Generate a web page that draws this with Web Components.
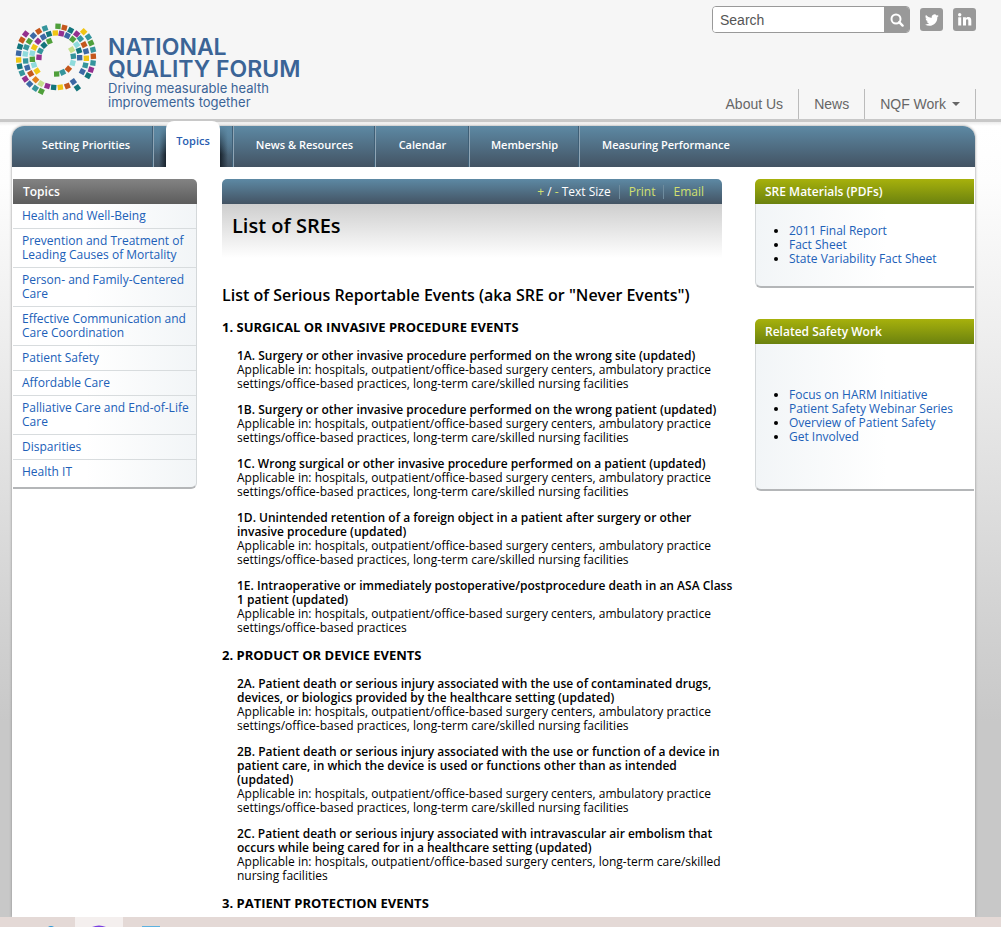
<!DOCTYPE html>
<html lang="en">
<head>
<meta charset="utf-8">
<meta name="viewport" content="width=device-width, initial-scale=1">
<title>NQF: List of SREs</title>
<style>
    * { box-sizing: border-box; }

    body {
        margin: 0;
        min-height: 100vh;
        display: flex;
        flex-direction: column;
        font-family: "Open Sans", "Noto Sans", sans-serif;
        font-size: 12px;
        line-height: 14px;
        color: #000;
        background: #fff;
    }

    nqf-page { flex: 1; }
    nqf-card a { color: #2060b8; text-decoration: none; }
</style>
</head>
<body>

<nqf-header></nqf-header>

<nqf-page>
    <nqf-nav slot="nav"></nqf-nav>
    <nqf-topics slot="left"></nqf-topics>
    <nqf-article slot="main"></nqf-article>
    <nqf-card slot="right" heading="SRE Materials (PDFs)">
        <li><a href="#">2011 Final Report</a></li>
        <li><a href="#">Fact Sheet</a></li>
        <li><a href="#">State Variability Fact Sheet</a></li>
    </nqf-card>
    <nqf-card slot="right" heading="Related Safety Work" roomy>
        <li><a href="#">Focus on HARM Initiative</a></li>
        <li><a href="#">Patient Safety Webinar Series</a></li>
        <li><a href="#">Overview of Patient Safety</a></li>
        <li><a href="#">Get Involved</a></li>
    </nqf-card>
</nqf-page>

<nqf-taskbar></nqf-taskbar>

<script>
const COLORS = {
    p: "#93308f", o: "#c4571c", d: "#13757c", b: "#3c68a4", y: "#f0c514",
    t: "#35959c", g: "#4f9f3b", c: "#8fdbdc", l: "#c3df8b", a: "#e0801c"
};

// tiles of the ring: x, y, colour
const TILES = [
    [47,48,"p"],[36,66,"o"],[30,86,"d"],[26,106,"b"],[26,126,"y"],[29,145,"d"],[36,165,"t"],[46,183,"p"],[59,198,"b"],[76,211,"t"],[94,220,"g"],
    [105,31,"t"],[86,40,"o"],[70,53,"b"],[58,70,"g"],[49,88,"t"],[46,108,"c"],[47,129,"t"],[52,149,"b"],[62,167,"o"],[77,185,"a"],[93,197,"l"],
    [112,204,"p"],[131,208,"d"],[151,208,"y"],[172,204,"o"],[190,191,"b"],[202,209,"d"],
    [117,48,"d"],[100,57,"b"],[84,70,"p"],[73,88,"y"],[67,106,"c"],[67,124,"g"],[72,141,"c"],[81,159,"y"],
    [118,70,"g"],[102,82,"d"],[91,99,"t"],[87,118,"p"],
    [144,25,"g"],[163,29,"o"],[182,37,"d"],[200,48,"p"],[211,62,"t"],[221,41,"y"],[235,57,"t"],[243,75,"g"],[249,95,"t"],[250,115,"o"],[249,135,"t"],[243,155,"p"],[234,173,"d"],
    [222,80,"o"],[228,100,"b"],[229,121,"y"],[226,142,"t"],[217,161,"b"],
    [136,45,"y"],[154,47,"p"],[172,53,"b"],[188,64,"g"],[200,80,"c"],[207,98,"d"],[209,119,"b"],
    [185,95,"l"],[190,115,"t"],[188,135,"c"],[175,153,"o"],[158,163,"t"],[140,168,"g"]
];

class NqfHeader extends HTMLElement {
    constructor() {
        super();
        this.attachShadow({ mode: "open" });

        const tiles = TILES.map(([x, y, c]) => {
            const angle = Math.round(Math.atan2(y - 122, x - 139) * 180 / Math.PI);
            return `<rect x="-8" y="-8" width="16" height="16" fill="${COLORS[c]}" transform="translate(${x} ${y}) rotate(${angle})"/>`;
        }).join("");

        this.shadowRoot.innerHTML = `
            <style>
                * { box-sizing: border-box; }

                :host {
                    display: block;
                    background: #f6f6f6;
                    border-bottom: 3px solid #c8c8c8;
                }

                .inner {
                    display: flex;
                    justify-content: space-between;
                    min-height: 119px;
                    padding: 0 25px 0 10px;
                }

                .logo {
                    display: flex;
                    gap: 6px;
                    padding-top: 18px;
                    color: #3b6496;
                    text-decoration: none;
                    font-family: Inter, sans-serif;
                }

                .name {
                    padding-top: 18px;
                    font-size: 23px;
                    line-height: 22px;
                    font-weight: 600;
                }

                .name span { display: block; }

                .name .motto {
                    padding-top: 1px;
                    font-size: 13px;
                    line-height: 14px;
                    font-weight: 400;
                }

                .side {
                    display: flex;
                    flex-direction: column;
                    justify-content: space-between;
                    align-items: flex-end;
                    padding-top: 6px;
                    font-family: "Liberation Sans", Arial, sans-serif;
                }

                .tools { display: flex; gap: 10px; align-items: center; }

                form {
                    display: flex;
                    height: 27px;
                    border: 1px solid #999;
                    border-radius: 4px;
                    overflow: hidden;
                    background: #fff;
                }

                input {
                    width: 171px;
                    border: 0;
                    padding: 0 7px;
                    font: 14px "Liberation Sans", Arial, sans-serif;
                    outline: 0;
                }

                input::placeholder { color: #555; opacity: 1; }

                button {
                    width: 25px;
                    border: 0;
                    padding: 0;
                    background: #999;
                    display: grid;
                    place-items: center;
                }

                .social {
                    width: 23px;
                    height: 23px;
                    border-radius: 3px;
                    background: #999;
                    display: grid;
                    place-items: center;
                }

                nav { display: flex; border-right: 1px solid #bbb; }

                nav a {
                    display: flex;
                    align-items: center;
                    gap: 6px;
                    height: 30px;
                    padding: 0 15px;
                    font-size: 14px;
                    color: #666;
                    text-decoration: none;
                }

                nav a + a { border-left: 1px solid #bbb; }

                .caret {
                    border: 4px solid transparent;
                    border-top-color: #666;
                    border-bottom: 0;
                }
            </style>

            <header class="inner">
                <a class="logo" href="#">
                    <svg width="92" height="82" viewBox="0 0 276 246" aria-hidden="true">${tiles}</svg>
                    <span class="name">
                        <span>NATIONAL</span>
                        <span>QUALITY FORUM</span>
                        <span class="motto">Driving measurable health<br>improvements together</span>
                    </span>
                </a>
                <div class="side">
                    <div class="tools">
                        <form role="search">
                            <input type="text" placeholder="Search" aria-label="Search">
                            <button type="button" aria-label="Go">
                                <svg width="14" height="14" viewBox="0 0 14 14" fill="none" stroke="#fff">
                                    <circle cx="6" cy="6" r="4.5" stroke-width="2"/>
                                    <path d="M9.2 9.2 12.6 12.6" stroke-width="2.4" stroke-linecap="round"/>
                                </svg>
                            </button>
                        </form>
                        <a class="social" href="#" aria-label="Twitter">
                            <svg width="14" height="14" viewBox="0 0 24 24" fill="#fff"><path d="M23.6 4.9a9.6 9.6 0 0 1-2.8.8 4.8 4.8 0 0 0 2.1-2.7 9.6 9.6 0 0 1-3 1.2 4.8 4.8 0 0 0-8.3 4.4A13.7 13.7 0 0 1 1.7 3.5a4.8 4.8 0 0 0 1.5 6.5 4.8 4.8 0 0 1-2.2-.6v.1a4.8 4.8 0 0 0 3.9 4.7 4.8 4.8 0 0 1-2.2.1 4.8 4.8 0 0 0 4.5 3.4A9.7 9.7 0 0 1 0 19.6a13.7 13.7 0 0 0 7.4 2.2c8.9 0 14-7.5 13.7-14.4a9.8 9.8 0 0 0 2.5-2.5z"/></svg>
                        </a>
                        <a class="social" href="#" aria-label="LinkedIn">
                            <svg width="15" height="15" viewBox="0 0 15 15" fill="#fff"><circle cx="2.7" cy="2.7" r="1.7"/><path d="M1.2 5.2h3v8.3h-3zM6 5.2h2.9v1.2c.5-.9 1.4-1.4 2.5-1.4 2.3 0 2.9 1.5 2.9 3.7v4.8h-3V9.2c0-1-.1-1.9-1.2-1.9S9 8.2 9 9.2v4.3H6z"/></svg>
                        </a>
                    </div>
                    <nav>
                        <a href="#">About Us</a>
                        <a href="#">News</a>
                        <a href="#">NQF Work <span class="caret"></span></a>
                    </nav>
                </div>
            </header>
        `;
    }
}

class NqfPage extends HTMLElement {
    constructor() {
        super();
        this.attachShadow({ mode: "open" });

        this.shadowRoot.innerHTML = `
            <style>
                :host {
                    display: flex;
                    padding: 4px 26px 0 12px;
                    background: linear-gradient(#ececec, #fff 4px, #fdfdfd 60px, #c8c8c8 600px);
                }

                .sheet {
                    flex: 1;
                    background: #fff;
                    border-radius: 12px 12px 0 0;
                    box-shadow: 0 0 3px #888;
                    clip-path: inset(-5px -5px 0 -5px);
                }

                .columns {
                    display: grid;
                    grid-template-columns: 184px minmax(0, 1fr) 219px;
                    align-items: start;
                    padding: 12px 1px 0;
                }

                .main { padding: 0 33px 0 25px; }
                .right { display: grid; gap: 31px; }
            </style>

            <div class="sheet">
                <slot name="nav"></slot>
                <div class="columns">
                    <slot name="left"></slot>
                    <div class="main"><slot name="main"></slot></div>
                    <div class="right"><slot name="right"></slot></div>
                </div>
            </div>
        `;
    }
}

class NqfNav extends HTMLElement {
    constructor() {
        super();
        this.attachShadow({ mode: "open" });

        this.shadowRoot.innerHTML = `
            <style>
                :host { display: block; }

                nav {
                    display: flex;
                    height: 41px;
                    border-radius: 12px 12px 0 0;
                    background: linear-gradient(#5d89a4, #435363);
                }

                a {
                    display: flex;
                    align-items: center;
                    justify-content: center;
                    padding-bottom: 3px;
                    box-sizing: border-box;
                    color: #fff;
                    font-size: 11px;
                    font-weight: 600;
                    text-decoration: none;
                    border-right: 1px solid #8fa5b5;
                    box-shadow: inset -1px 0 #3f5f76;
                }

                .w80 { width: 80px; }
                .w94 { width: 94px; }
                .w110 { width: 110px; }
                .w142 { width: 142px; }
                .first { padding-left: 7px; }

                .last {
                    padding-left: 22px;
                    border: 0;
                    box-shadow: none;
                }

                .current {
                    padding: 0 13px 0 12px;
                    background:
                        linear-gradient(#5d89a4, transparent 70%),
                        linear-gradient(90deg, transparent 5px, #18222c 12px, #18222c 66px, transparent 74px);
                }

                .tab {
                    flex: 1;
                    align-self: flex-end;
                    height: 46px;
                    margin-top: -5px;
                    padding-top: 13px;
                    box-sizing: border-box;
                    border-radius: 8px 8px 0 0;
                    background: #fff;
                    color: #2a5db0;
                    text-align: center;
                }
            </style>

            <nav>
                <a class="w142 first" href="#">Setting Priorities</a>
                <a class="w80 current" href="#" aria-current="page"><span class="tab">Topics</span></a>
                <a class="w142" href="#">News &amp; Resources</a>
                <a class="w94" href="#">Calendar</a>
                <a class="w110" href="#">Membership</a>
                <a class="last" href="#">Measuring Performance</a>
            </nav>
        `;
    }
}

class NqfTopics extends HTMLElement {
    constructor() {
        super();
        this.attachShadow({ mode: "open" });

        const topics = [
            "Health and Well-Being",
            "Prevention and Treatment of Leading Causes of Mortality",
            "Person- and Family-Centered Care",
            "Effective Communication and Care Coordination",
            "Patient Safety",
            "Affordable Care",
            "Palliative Care and End-of-Life Care",
            "Disparities",
            "Health IT"
        ];

        this.shadowRoot.innerHTML = `
            <style>
                :host { display: block; }

                h2 {
                    margin: 0;
                    padding: 0 10px;
                    font-size: 12px;
                    line-height: 25px;
                    font-weight: 600;
                    color: #fff;
                    background: linear-gradient(#838383, #5c5c5c);
                    border-radius: 0 5px 0 0;
                }

                ul {
                    margin: 0;
                    padding: 0 0 2px;
                    list-style: none;
                    border: 1px solid #d4d8da;
                    border-width: 0 1px 2px 0;
                    border-bottom-color: #b4b6b8;
                    border-radius: 0 0 6px 0;
                    background: linear-gradient(90deg, #fff 40%, #f2f5f7);
                }

                li { padding: 5px 2px 5px 9px; border-bottom: 1px solid #d8dcde; }
                li:last-child { padding-bottom: 6px; border: 0; }
                a { color: #2060b8; text-decoration: none; }
            </style>

            <h2>Topics</h2>
            <ul>${topics.map(t => `<li><a href="#">${t}</a></li>`).join("")}</ul>
        `;
    }
}

class NqfArticle extends HTMLElement {
    constructor() {
        super();
        this.attachShadow({ mode: "open" });

        const offices = "Applicable in: hospitals, outpatient/office-based surgery centers, ambulatory practice settings/office-based practices";
        const all = offices + ", long-term care/skilled nursing facilities";
        const noAmbulatory = "Applicable in: hospitals, outpatient/office-based surgery centers, long-term care/skilled nursing facilities";

        const sections = [
            ["1. SURGICAL OR INVASIVE PROCEDURE EVENTS", [
                ["1A. Surgery or other invasive procedure performed on the wrong site (updated)", all],
                ["1B. Surgery or other invasive procedure performed on the wrong patient (updated)", all],
                ["1C. Wrong surgical or other invasive procedure performed on a patient (updated)", all],
                ["1D. Unintended retention of a foreign object in a patient after surgery or other invasive procedure (updated)", all],
                ["1E. Intraoperative or immediately postoperative/postprocedure death in an ASA Class 1 patient (updated)", offices]
            ]],
            ["2. PRODUCT OR DEVICE EVENTS", [
                ["2A. Patient death or serious injury associated with the use of contaminated drugs, devices, or biologics provided by the healthcare setting (updated)", all],
                ["2B. Patient death or serious injury associated with the use or function of a device in patient care, in which the device is used or functions other than as intended (updated)", all],
                ["2C. Patient death or serious injury associated with intravascular air embolism that occurs while being cared for in a healthcare setting (updated)", noAmbulatory]
            ]],
            ["3. PATIENT PROTECTION EVENTS", []]
        ];

        this.shadowRoot.innerHTML = `
            <style>
                :host { display: block; padding-bottom: 6px; }

                .bar {
                    display: flex;
                    justify-content: flex-end;
                    align-items: center;
                    height: 25px;
                    padding-right: 18px;
                    border-radius: 5px 5px 0 0;
                    background: linear-gradient(#5d89a4, #435363);
                    color: #fff;
                }

                .bar a { color: #d3e06f; text-decoration: none; }

                .bar > a {
                    margin-left: 8px;
                    padding-left: 9px;
                    border-left: 1px solid #6f8c9e;
                }

                h1 {
                    margin: 0;
                    height: 54px;
                    padding: 10px 10px 0;
                    box-sizing: border-box;
                    font-size: 20px;
                    line-height: 24px;
                    font-weight: 600;
                    background: linear-gradient(#cecece, #fff);
                }

                h2 {
                    margin: 27px 0 14px;
                    font-size: 16px;
                    line-height: 20px;
                    font-weight: 600;
                }

                h3 {
                    margin: 12px 0 14px;
                    font-size: 13px;
                    line-height: 16px;
                    font-weight: 700;
                }

                h3:last-child { margin-bottom: 0; }

                h4, p {
                    margin: 0 0 0 15px;
                    font-size: 12px;
                    line-height: 14px;
                }

                /* event names run a little into the gutter */
                h4 { margin-right: -12px; font-weight: 600; }
                p + h4 { margin-top: 12px; }
            </style>

            <div class="bar">
                <span><a href="#">+</a> / <a href="#">-</a> Text Size</span>
                <a href="#">Print</a>
                <a href="#">Email</a>
            </div>
            <h1>List of SREs</h1>
            <h2>List of Serious Reportable Events (aka SRE or "Never Events")</h2>
            ${sections.map(([title, events]) => `<h3>${title}</h3>${
                events.map(([name, where]) => `<h4>${name}</h4><p>${where}</p>`).join("")
            }`).join("")}
        `;
    }
}

class NqfCard extends HTMLElement {
    constructor() {
        super();
        this.attachShadow({ mode: "open" });

        this.shadowRoot.innerHTML = `
            <style>
                :host { display: block; }

                h2 {
                    margin: 0;
                    padding: 0 10px;
                    font-size: 12px;
                    line-height: 25px;
                    font-weight: 600;
                    color: #fff;
                    background: linear-gradient(#a7b10c, #6b820f);
                    border-radius: 5px 0 0 0;
                }

                ul {
                    margin: 0;
                    padding: 20px 10px 20px 33px;
                    border: 1px solid #d4d8da;
                    border-width: 0 0 2px 1px;
                    border-bottom-color: #b4b6b8;
                    border-radius: 0 0 0 6px;
                    background: linear-gradient(90deg, #f2f5f7, #fff 60%);
                }

                :host([roomy]) ul { padding-top: 44px; padding-bottom: 45px; }
            </style>

            <h2>${this.getAttribute("heading")}</h2>
            <ul><slot></slot></ul>
        `;
    }
}

class NqfTaskbar extends HTMLElement {
    constructor() {
        super();
        this.attachShadow({ mode: "open" });

        this.shadowRoot.innerHTML = `
            <style>
                :host { display: block; height: 10px; background: #e4d9d6; }
                svg { display: block; }
            </style>

            <svg width="180" height="10" viewBox="0 0 180 10" aria-hidden="true">
                <path d="M75 0h48v10H75z" fill="#f4efee"/>
                <path d="M48 10q3-2 6 0z" fill="#2795d6"/>
                <path d="M92 10q7-3 14 0z" fill="#7a3fe0"/>
                <path d="M142 9h18v1h-18z" fill="#5db2e0"/>
            </svg>
        `;
    }
}

customElements.define("nqf-header", NqfHeader);
customElements.define("nqf-page", NqfPage);
customElements.define("nqf-nav", NqfNav);
customElements.define("nqf-topics", NqfTopics);
customElements.define("nqf-article", NqfArticle);
customElements.define("nqf-card", NqfCard);
customElements.define("nqf-taskbar", NqfTaskbar);
</script>
</body>
</html>
